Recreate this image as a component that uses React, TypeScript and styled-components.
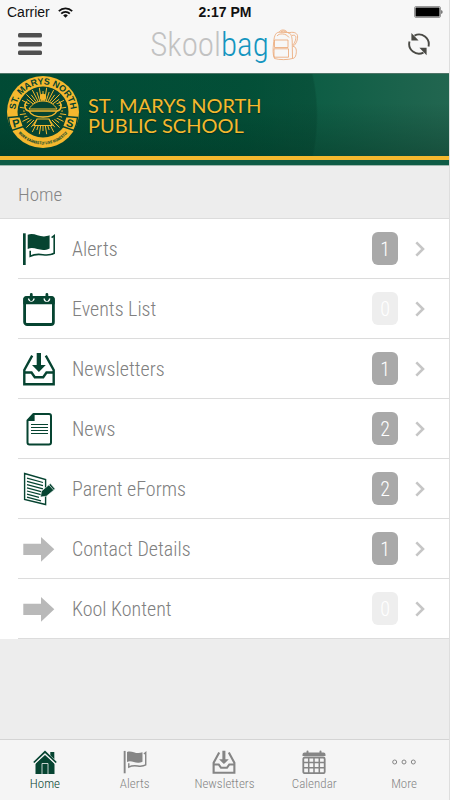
import React from 'react';
import styled, { createGlobalStyle } from 'styled-components';

const GREEN = '#064431';
const GOLD = '#f5b82e';
const condensed = `'Roboto Condensed', Roboto, sans-serif`;

const GlobalStyle = createGlobalStyle`
  *, *::before, *::after { box-sizing: border-box; }
  body { margin: 0; background: #ededed; }
  button { border: 0; padding: 0; background: none; cursor: pointer; }
  a { color: inherit; text-decoration: none; }
  svg { display: block; flex: none; }
`;

const Page = styled.div`
  min-height: 100vh;
  display: flex;
  flex-direction: column;
  border-right: 1px solid #dedede;
  background: #ededed;
  font-family: ${condensed};
  font-weight: 300;
`;

const StatusBar = styled.div`
  display: grid;
  grid-template-columns: 1fr auto 1fr;
  align-items: center;
  height: 24px;
  padding: 0 6px 0 7px;
  background: #f7f7f7;
  color: #111;
  font: 400 14px/24px 'Liberation Sans', Arial, sans-serif;
`;

const Carrier = styled.div`
  display: flex;
  align-items: center;
  gap: 8px;
`;

const Clock = styled.time`
  font-weight: 700;
`;

const BatterySlot = styled.div`
  justify-self: end;
`;

const NavBar = styled.header`
  display: grid;
  grid-template-columns: 1fr auto 1fr;
  align-items: start;
  height: 49px;
  padding: 0 18px;
  background: #f7f7f7;
`;

const IconButton = styled.button<{ $end?: boolean }>`
  justify-self: ${p => (p.$end ? 'end' : 'start')};
  padding-top: 8px;
`;

const Logo = styled.div`
  display: flex;
  align-items: center;
  gap: 2px;
  height: 42px;
  color: #c2c2c2;
  font-size: 33px;
  line-height: 42px;
`;

const LogoAccent = styled.span`
  color: #1495bf;
`;

const Banner = styled.section`
  display: flex;
  flex-direction: column;
  border-top: 1px solid #4f7568;
  border-bottom: 1px solid #9fb8ae;
`;

const BannerBody = styled.div`
  display: flex;
  align-items: center;
  gap: 8px;
  height: 82px;
  padding: 0 6px;
  background:
    radial-gradient(circle 190px at 128px 42px, rgba(0, 56, 38, 0.3) 99%, transparent 100%),
    linear-gradient(to bottom, rgba(0, 0, 0, 0) 35%, rgba(0, 30, 18, 0.3) 100%),
    linear-gradient(to right, #01523b 0%, #04593f 55%, #226650 100%);
`;

const CrestFrame = styled.div`
  margin-bottom: 6px;
`;

const BannerStripe = styled.div`
  height: 9px;
  border-top: 4px solid ${GOLD};
  background: #0e5b45;
`;

const SchoolName = styled.h1`
  margin: 0;
  color: ${GOLD};
  font: 400 20px/20px Lato, sans-serif;
  text-shadow: 0 1px 1px rgba(0, 30, 18, 0.6);
`;

const NameLine = styled.span`
  display: block;
`;

const SectionTitle = styled.h2`
  margin: 0;
  padding: 6px 18px 0;
  height: 53px;
  border-bottom: 1px solid #dcdcdc;
  color: #858585;
  font-size: 19px;
  font-weight: 300;
  line-height: 46px;
`;

const Menu = styled.ul`
  margin: 0;
  padding: 0 0 0 18px;
  list-style: none;
  background: #fff;
`;

const MenuLink = styled.a`
  display: flex;
  align-items: center;
  height: 60px;
  padding: 0 24px 0 4px;
  border-bottom: 1px solid #dcdcdc;
  color: #808080;
  font-size: 20px;
`;

const MenuLabel = styled.span`
  flex: 1;
  margin-left: 16px;
`;

const Badge = styled.span<{ $empty: boolean }>`
  width: 26px;
  height: 33px;
  margin-right: 17px;
  border-radius: 6px;
  background: ${p => (p.$empty ? '#eeeeee' : '#a9a9a9')};
  color: #fff;
  line-height: 35px;
  text-align: center;
`;

const Filler = styled.div`
  flex: 1;
`;

const TabBar = styled.nav`
  display: grid;
  grid-template-columns: repeat(5, 1fr);
  height: 61px;
  border-top: 1px solid #d4d4d4;
  background: #f5f5f5;
`;

const Tab = styled.a<{ $active?: boolean }>`
  display: flex;
  flex-direction: column;
  align-items: center;
  gap: 2px;
  padding-top: 10px;
  color: ${p => (p.$active ? GREEN : '#858585')};
  font-size: 13px;
  line-height: 16px;
`;

type IconProps = { size?: number; color?: string; weight?: number };

const FlagIcon = ({ size = 34, color = GREEN, weight = 1.6 }: IconProps) => (
  <svg width={size} height={size} viewBox="0 0 34 34" fill={color} aria-hidden="true">
    <path d="M1 1.3h2.7V33H1z" />
    <path d="M5.700 2.800C13-.2 18 7 27.600 3.300v13.200C18 21 13 13.600 5.700 17z" />
    <path
      d="M29.600 5.600l2.600-2v17.600c-8.400 5-14-2-24 3v-5.500"
      fill="none"
      stroke={color}
      strokeWidth={weight}
    />
  </svg>
);

const DateIcon = () => (
  <svg width="34" height="34" viewBox="0 0 34 34" aria-hidden="true">
    <rect x="2.600" y="5.500" width="28.800" height="27" rx="2.600" fill="none" stroke={GREEN} strokeWidth="2.800" />
    <path d="M1.300 12.300V7.200a3 3 0 0 1 3-3h25.400a3 3 0 0 1 3 3v5.100z" fill={GREEN} />
    <path d="M6.600 6.400a2.700 2.700 0 1 0 5.400 0M22.200 6.400a2.700 2.700 0 1 0 5.400 0" fill="none" stroke="#fff" strokeWidth="1.400" />
    <path d="M9.300 2.500v5.200M24.900 2.500v5.200" stroke={GREEN} strokeWidth="2.800" strokeLinecap="round" />
  </svg>
);

const TrayIcon = ({ size = 34, color = GREEN, weight = 2.4 }: IconProps) => (
  <svg width={size} height={size} viewBox="0 0 34 34" aria-hidden="true">
    <path d="M14.700 1H19v12h4.800L16.900 20 10 13h4.700z" fill={color} />
    <path
      d="M10.200 3.600L2.300 18v14.300h29.400V18L23.800 3.600M2.300 20.500h7.200l3.300 4.700h8.400l3.300-4.700h7.200"
      fill="none"
      stroke={color}
      strokeWidth={weight}
    />
  </svg>
);

const NewsIcon = () => (
  <svg width="34" height="34" viewBox="0 0 34 34" aria-hidden="true">
    <path
      d="M11.500 2H27a2 2 0 0 1 2 2v26.500a2 2 0 0 1-2 2H7.500a2 2 0 0 1-2-2V8.500z"
      fill="none"
      stroke={GREEN}
      strokeWidth="2"
      strokeLinejoin="round"
    />
    <path d="M12.600 1.500v7.500H4.800z" fill={GREEN} />
    <path d="M9 12.500h17M9 15.500h17M9 18.500h17M9 21.500h17" stroke={GREEN} strokeWidth="1" />
  </svg>
);

const FormIcon = () => (
  <svg width="34" height="34" viewBox="0 0 34 34" aria-hidden="true">
    <path d="M2.600 1.500l21 6V32.500l-21-5z" fill="#fff" stroke={GREEN} strokeWidth="1.400" />
    <path
      d="M5 6.200l16 4.300M5 9.400l16 4.300M5 12.600l16 4.300M5 15.800l15 4M5 19l14 3.700M5 22.200l12 3.200M5 25.200l14 3.600"
      stroke={GREEN}
      strokeWidth="1.200"
    />
    <path d="M19.600 19l8.800-7.400 4.800 5.400-8.800 7.200-6 .9z" fill={GREEN} stroke="#fff" strokeWidth=".6" />
    <path d="M27 13l4.600 5" stroke="#fff" strokeWidth=".7" />
  </svg>
);

const ArrowIcon = () => (
  <svg width="34" height="34" viewBox="0 0 34 34" fill="#b9b9b9" aria-hidden="true">
    <path d="M1.300 11.700H19V5l13.300 12.300L19 29.700V23H1.300z" />
  </svg>
);

const Chevron = () => (
  <svg width="10" height="16" viewBox="0 0 10 16" aria-hidden="true">
    <path d="M1.300 1.300L8 8l-6.700 6.700" fill="none" stroke="#c6c6c6" strokeWidth="2.600" />
  </svg>
);

const HomeIcon = () => (
  <svg width="24" height="24" viewBox="0 0 24 24" fill={GREEN} aria-hidden="true">
    <path d="M17.300 2H21.300v8l-4-3.800z" />
    <path d="M12 4.800l9.500 8.500V24h-19V13.300z" />
    <path d="M9 24V13.500h6V24" fill="none" stroke="#f5f5f5" strokeWidth=".8" />
    <path d="M1 13L12 2.500 23 13" fill="none" stroke="#f5f5f5" strokeWidth="3.200" />
    <path d="M.800 12.500L12 1.800l11.200 10.700" fill="none" stroke={GREEN} strokeWidth="1.700" />
  </svg>
);

const CalendarIcon = () => (
  <svg width="24" height="24" viewBox="0 0 24 24" fill="none" stroke="#858585" aria-hidden="true">
    <path d="M.500 6V4.500a2 2 0 0 1 2-2h19a2 2 0 0 1 2 2V6z" fill="#858585" stroke="none" />
    <path d="M5.500 1.500v3M18.500 1.500v3" strokeWidth="2" strokeLinecap="round" />
    <rect x="1.300" y="7.500" width="21.400" height="15.700" rx="1.500" strokeWidth="1.800" />
    <path d="M6.700 7v16M12 7v16M17.300 7v16M1 12.500h22M1 17.800h22" strokeWidth="1.500" />
  </svg>
);

const MoreIcon = () => (
  <svg width="24" height="24" viewBox="0 0 24 24" fill="none" stroke="#858585" strokeWidth="1" aria-hidden="true">
    <circle cx="2.700" cy="12" r="2" />
    <circle cx="12" cy="12" r="2" />
    <circle cx="21.300" cy="12" r="2" />
  </svg>
);

const WifiIcon = () => (
  <svg width="15" height="11" viewBox="0 0 15 11" fill="none" stroke="#111" strokeWidth="1.700" aria-hidden="true">
    <path d="M.800 4.200a9.500 9.500 0 0 1 13.400 0M3.200 6.700a6 6 0 0 1 8.600 0" />
    <path d="M7.500 10.700L5.200 8.400a3.300 3.300 0 0 1 4.600 0z" fill="#111" stroke="none" />
  </svg>
);

const BatteryIcon = () => (
  <svg width="29" height="12" viewBox="0 0 29 12" aria-hidden="true">
    <rect x=".500" y=".500" width="26" height="11" rx="1.500" fill="none" stroke="#999" />
    <rect x="1.500" y="1.500" width="24" height="9" rx=".500" fill="#000" />
    <path d="M27.500 4c1.200.4 1.200 3.600 0 4z" fill="#000" />
  </svg>
);

const MenuIcon = () => (
  <svg width="24" height="24" viewBox="0 0 24 24" fill="#505050" aria-hidden="true">
    <rect y="1" width="24" height="4.500" rx="1.500" />
    <rect y="10" width="24" height="4.500" rx="1.500" />
    <rect y="18.500" width="24" height="4.500" rx="1.500" />
  </svg>
);

const RefreshIcon = () => (
  <svg width="24" height="24" viewBox="0 0 24 24" aria-hidden="true">
    <path
      d="M7.500 3.600A9.800 9.800 0 0 1 21.500 14.500M16.500 20.600A9.800 9.800 0 0 1 2.500 9.500"
      fill="none"
      stroke="#4a4a45"
      strokeWidth="1.900"
    />
    <path d="M4.400 1v7.400h7.200zM19.600 23.200v-7.400h-7.200z" fill="#4a4a45" />
  </svg>
);

const BackpackIcon = () => (
  <svg width="28" height="34" viewBox="0 -1 28 34" fill="none" stroke="#eba571" strokeWidth=".8" aria-hidden="true">
    <path d="M3.500 29.500C1.500 25 2 20 2.500 15 3 8 4 3.500 8 3.200l9 .3c3 .5 4 4 4.200 8.500l.3 17.500c-5 1.500-13 1.500-18 0z" />
    <path d="M8.500 3c.5-2.700 6.500-2.700 7.500.2M10 3c.5-1.300 4.500-1.200 5 .2" />
    <path d="M3.500 11h13.500v7.500H3.500zM3 19.800h14.500v8.400H3z" />
    <path d="M17 4c5-1.500 8.500-.5 9.500 2.500.5 4-1 8-4.500 11M21 6.500c3-1 4.200.5 3.800 3-.3 2.500-1.500 5-3 6.500M21.800 17c3.500 1 4 4 3.200 8.500-.5 2.500-1.500 3.800-3.500 4" />
    <path d="M6 7c2-3 9-3 12 1.500" />
  </svg>
);

const rays = Array.from({ length: 40 }, (_, i) => {
  const angle = (i * Math.PI * 2) / 40;
  const outer = i % 2 ? 23.500 : 20;
  const x = Math.cos(angle);
  const y = Math.sin(angle);
  return `M${36 + x * 10} ${35 + y * 10}L${36 + x * outer} ${35 + y * outer}`;
}).join('');

const Crest = () => (
  <svg width="74" height="74" viewBox="-1 -1 74 74" role="img" aria-label="School crest">
    <defs>
      <path id="crest-top" d="M9.100 43.200A27.800 27.800 0 1 1 62.900 43.200" />
      <path id="crest-bottom" d="M7 50.500A32.400 32.400 0 0 0 65 50.500" />
    </defs>
    <circle cx="36" cy="36" r="36" fill={GOLD} />
    <circle cx="36" cy="36" r="25.500" fill={GREEN} />
    <path d={rays} stroke={GOLD} strokeWidth="1" />
    <path d="M17 33c2 5 3 9 9 11h20c6-2 7-6 9-11l-5-5H22z" fill={GREEN} />
    <path d="M22 33c3-5 8-8 14-8s11 3 14 8z" fill={GREEN} stroke={GOLD} strokeWidth="1" />
    <path d="M22 35h28c-2 4-8 6-14 6s-12-2-14-6z" fill="none" stroke={GOLD} strokeWidth="1.400" />
    <path d="M22 35c-5-1-5-7-2-9.500M50 35c5-1 5-7 2-9.500" fill="none" stroke={GOLD} strokeWidth="1.600" />
    <circle cx="36" cy="21" r="3.200" fill={GOLD} />
    <path d="M30 43h12l3 6.500H27z" fill={GREEN} stroke={GOLD} strokeWidth="1.200" />
    <path
      d="M1.500 41.500l11.500-1 3.500 10L5 54.500c-2-4-3.300-9-3.500-13zM70.500 41.500l-11.500-1-3.500 10L67 54.500c2-4 3.300-9 3.500-13z"
      fill={GOLD}
      stroke={GREEN}
      strokeWidth="1.400"
    />
    <g fill={GREEN} fontWeight="700" textAnchor="middle">
      <text fontSize="9" fontFamily="'Liberation Sans', Arial, sans-serif">
        <textPath href="#crest-top" startOffset="50%">ST. MARYS NORTH</textPath>
      </text>
      <text fontSize="4" fontFamily="'Roboto Condensed', sans-serif">
        <textPath href="#crest-bottom" startOffset="50%">WORK EARNESTLY LIVE HONESTLY</textPath>
      </text>
      <g fontSize="11" fontFamily="'Liberation Sans', Arial, sans-serif">
        <text x="9" y="51" transform="rotate(-14 9 47)">P</text>
        <text x="63" y="51" transform="rotate(14 63 47)">S</text>
      </g>
    </g>
  </svg>
);

const menuItems = [
  { label: 'Alerts', count: 1, Icon: FlagIcon },
  { label: 'Events List', count: 0, Icon: DateIcon },
  { label: 'Newsletters', count: 1, Icon: TrayIcon },
  { label: 'News', count: 2, Icon: NewsIcon },
  { label: 'Parent eForms', count: 2, Icon: FormIcon },
  { label: 'Contact Details', count: 1, Icon: ArrowIcon },
  { label: 'Kool Kontent', count: 0, Icon: ArrowIcon },
];

export default function App() {
  return (
    <>
      <GlobalStyle />
      <Page>
        <StatusBar>
          <Carrier>
            Carrier
            <WifiIcon />
          </Carrier>
          <Clock>2:17 PM</Clock>
          <BatterySlot>
            <BatteryIcon />
          </BatterySlot>
        </StatusBar>
        <NavBar>
          <IconButton type="button" aria-label="Menu">
            <MenuIcon />
          </IconButton>
          <Logo>
            <span>
              Skool<LogoAccent>bag</LogoAccent>
            </span>
            <BackpackIcon />
          </Logo>
          <IconButton type="button" aria-label="Refresh" $end>
            <RefreshIcon />
          </IconButton>
        </NavBar>
        <Banner>
          <BannerBody>
            <CrestFrame>
              <Crest />
            </CrestFrame>
            <SchoolName>
              <NameLine>ST. MARYS NORTH</NameLine>
              <NameLine>PUBLIC SCHOOL</NameLine>
            </SchoolName>
          </BannerBody>
          <BannerStripe />
        </Banner>
        <main>
          <SectionTitle>Home</SectionTitle>
          <Menu>
            {menuItems.map(({ label, count, Icon }) => (
              <li key={label}>
                <MenuLink href="#">
                  <Icon />
                  <MenuLabel>{label}</MenuLabel>
                  <Badge $empty={count === 0}>{count}</Badge>
                  <Chevron />
                </MenuLink>
              </li>
            ))}
          </Menu>
        </main>
        <Filler />
        <TabBar>
          <Tab href="#" $active aria-current="page">
            <HomeIcon />
            Home
          </Tab>
          <Tab href="#">
            <FlagIcon size={24} color="#858585" weight={2} />
            Alerts
          </Tab>
          <Tab href="#">
            <TrayIcon size={24} color="#858585" weight={3} />
            Newsletters
          </Tab>
          <Tab href="#">
            <CalendarIcon />
            Calendar
          </Tab>
          <Tab href="#">
            <MoreIcon />
            More
          </Tab>
        </TabBar>
      </Page>
    </>
  );
}
